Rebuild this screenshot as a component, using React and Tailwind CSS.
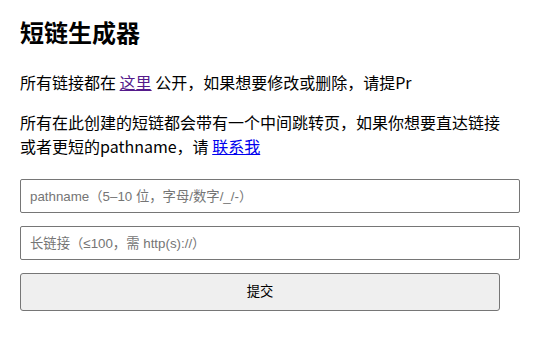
export default function App() {
  return (
    <div className="min-h-screen bg-white px-5 pt-4 text-black font-['Noto_Sans_CJK_SC',sans-serif]">
      <div className="w-[480px]">
        <h1 className="h-8 text-[24px] leading-8 font-bold mb-[22px]">短链生成器</h1>
        <p className="text-base leading-6 mb-4">
          所有链接都在 <a href="#" className="text-[#551a8b] underline">这里</a> 公开，如果想要修改或删除，请提Pr
        </p>
        <p className="text-base leading-6 mb-[21px]">
          所有在此创建的短链都会带有一个中间跳转页，如果你想要直达链接或者更短的pathname，请 <a href="#" className="text-[#0000ee] underline">联系我</a>
        </p>
        <form className="flex flex-col gap-[13px]" onSubmit={e => e.preventDefault()}>
          <input
            type="text"
            placeholder="pathname（5–10 位，字母/数字/_/-）"
            className="box-content w-full h-8 px-[9px] border border-[#767676] rounded-[2px] text-[13.33px] font-['Liberation_Sans','Noto_Sans_CJK_SC',sans-serif] placeholder:text-[#757575] outline-none"
          />
          <input
            type="text"
            placeholder="长链接（≤100，需 http(s)://）"
            className="box-content w-full h-8 px-[9px] border border-[#767676] rounded-[2px] text-[13.33px] font-['Liberation_Sans','Noto_Sans_CJK_SC',sans-serif] placeholder:text-[#757575] outline-none"
          />
          <button
            type="submit"
            className="w-full h-[38px] bg-[#efefef] border border-[#767676] rounded-[3px] text-[13.33px] text-black font-['Liberation_Sans','Noto_Sans_CJK_SC',sans-serif]"
          >
            提交
          </button>
        </form>
      </div>
    </div>
  );
}
